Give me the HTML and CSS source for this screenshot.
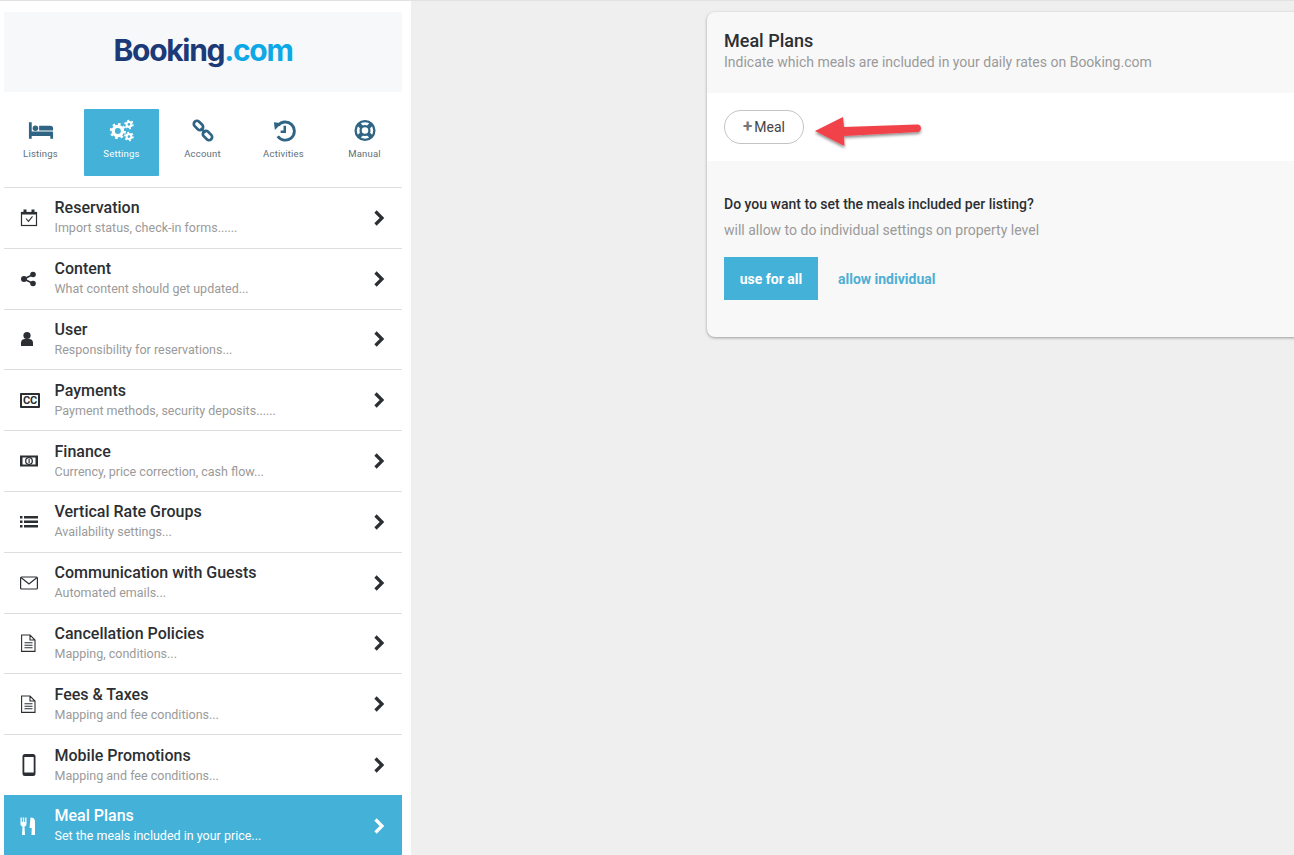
FILE: index.html
```html
<!DOCTYPE html>
<html lang="en">
<head>
<meta charset="utf-8">
<title>Meal Plans</title>
<link rel="stylesheet" href="styles.css">
</head>
<body>
<div class="app">
  <aside class="sidebar">
    <div class="logo"><span class="logo-text"><span class="logo-dark">Booking</span><span class="logo-light">.com</span></span></div>
    <nav class="tabs">
      <a class="tab">
        <svg class="tab-icon" viewBox="0 0 28 20"><path d="M1 1h3v10h22a1.500 1.500 0 0 1 1 1v7h-3v-3H4v3H1z"/><circle cx="8" cy="7.500" r="3"/><path d="M12 5h12a3 3 0 0 1 3 3v2H12z"/></svg>
        <span>Listings</span>
      </a>
      <a class="tab active">
        <svg class="tab-icon" viewBox="0 0 28 24"><g fill="none" stroke="currentColor"><circle cx="9.500" cy="12.500" r="5" stroke-width="3.500"/><circle cx="9.500" cy="12.500" r="7.500" stroke-width="2.400" stroke-dasharray="2.800 3.090"/><circle cx="21.500" cy="5.500" r="2.600" stroke-width="2.200"/><circle cx="21.500" cy="5.500" r="4.300" stroke-width="1.800" stroke-dasharray="2 2.500"/><circle cx="21.500" cy="18.500" r="2.600" stroke-width="2.200"/><circle cx="21.500" cy="18.500" r="4.300" stroke-width="1.800" stroke-dasharray="2 2.500"/></g></svg>
        <span>Settings</span>
      </a>
      <a class="tab">
        <svg class="tab-icon" viewBox="0 0 24 24"><g fill="none" stroke="currentColor" stroke-width="2.800"><rect x="1.800" y="3.500" width="11" height="6.500" rx="3.200" transform="rotate(45 7.300 6.700)"/><rect x="11.200" y="14" width="11" height="6.500" rx="3.200" transform="rotate(45 16.700 17.200)"/></g><path d="M9.500 9.500l5 5" fill="none" stroke="currentColor" stroke-width="2.600"/></svg>
        <span>Account</span>
      </a>
      <a class="tab">
        <svg class="tab-icon" viewBox="0 0 24 24"><path d="M6 6.500A9.500 9.500 0 1 1 5.500 18" fill="none" stroke="currentColor" stroke-width="3"/><path d="M1.500 3.500l8 1-7 7z"/><path d="M11.500 7h2.600v7.500H8.500V12h3z"/></svg>
        <span>Activities</span>
      </a>
      <a class="tab">
        <svg class="tab-icon" viewBox="0 0 24 24"><circle cx="12" cy="12" r="9.800" fill="none" stroke="currentColor" stroke-width="2.400"/><circle cx="12" cy="12" r="4.600" fill="none" stroke="currentColor" stroke-width="2.400"/><g stroke="currentColor" stroke-width="4.200"><path d="M5 5l4 4M19 5l-4 4M5 19l4-4M19 19l-4-4"/></g></svg>
        <span>Manual</span>
      </a>
    </nav>
    <ul class="menu">
      <li class="row">
        <svg class="row-icon" viewBox="0 0 18 18"><g fill="none" stroke="currentColor"><rect x="1.500" y="3.500" width="15" height="13" stroke-width="1.200"/><path d="M6 9.500l2.500 2.800 4-5" stroke-width="1.100"/></g><path d="M1 3h16v2.500H1zM3.500 0.500h3V3h-3zM11.500 0.500h3V3h-3z"/></svg>
        <div class="row-text"><div class="row-title">Reservation</div><div class="row-sub">Import status, check-in forms......</div></div>
        <svg class="chevron" viewBox="0 0 12 16"><path d="M2.500 1.500L9 8l-6.500 6.500" fill="none" stroke="currentColor" stroke-width="3.200"/></svg>
      </li>
      <li class="row">
        <svg class="row-icon" viewBox="0 0 18 18"><circle cx="4" cy="9" r="3"/><circle cx="13" cy="4.500" r="2.800"/><circle cx="13" cy="13.500" r="2.800"/><path d="M4 9l9-4.500M4 9l9 4.500" stroke="currentColor" stroke-width="1.500"/></svg>
        <div class="row-text"><div class="row-title">Content</div><div class="row-sub">What content should get updated...</div></div>
        <svg class="chevron" viewBox="0 0 12 16"><path d="M2.500 1.500L9 8l-6.500 6.500" fill="none" stroke="currentColor" stroke-width="3.200"/></svg>
      </li>
      <li class="row">
        <svg class="row-icon" viewBox="0 0 18 18"><circle cx="7" cy="5.500" r="3.600"/><path d="M1 16v-3.500C1 10 3 9 5 9h4c2 0 4 1 4 3.500V16z"/></svg>
        <div class="row-text"><div class="row-title">User</div><div class="row-sub">Responsibility for reservations...</div></div>
        <svg class="chevron" viewBox="0 0 12 16"><path d="M2.500 1.500L9 8l-6.500 6.500" fill="none" stroke="currentColor" stroke-width="3.200"/></svg>
      </li>
      <li class="row">
        <span class="cc-icon">CC</span>
        <div class="row-text"><div class="row-title">Payments</div><div class="row-sub">Payment methods, security deposits......</div></div>
        <svg class="chevron" viewBox="0 0 12 16"><path d="M2.500 1.500L9 8l-6.500 6.500" fill="none" stroke="currentColor" stroke-width="3.200"/></svg>
      </li>
      <li class="row">
        <svg class="row-icon" viewBox="0 0 18 18"><path fill-rule="evenodd" d="M0 3.500h18v11H0zM2.500 5.500v7h13v-7z"/><circle cx="9" cy="9" r="3.300" fill="none" stroke="currentColor" stroke-width="1.300"/><path d="M8.500 7h1.200v4H8.500z"/></svg>
        <div class="row-text"><div class="row-title">Finance</div><div class="row-sub">Currency, price correction, cash flow...</div></div>
        <svg class="chevron" viewBox="0 0 12 16"><path d="M2.500 1.500L9 8l-6.500 6.500" fill="none" stroke="currentColor" stroke-width="3.200"/></svg>
      </li>
      <li class="row">
        <svg class="row-icon" viewBox="0 0 18 18"><path d="M0 3h2.500v2.500H0zM4 3h14v2.500H4zM0 7.500h2.500V10H0zM4 7.500h14V10H4zM0 12h2.500v2.500H0zM4 12h14v2.500H4z"/></svg>
        <div class="row-text"><div class="row-title">Vertical Rate Groups</div><div class="row-sub">Availability settings...</div></div>
        <svg class="chevron" viewBox="0 0 12 16"><path d="M2.500 1.500L9 8l-6.500 6.500" fill="none" stroke="currentColor" stroke-width="3.200"/></svg>
      </li>
      <li class="row">
        <svg class="row-icon" viewBox="0 0 18 18"><g fill="none" stroke="currentColor" stroke-width="1.200"><rect x="0.600" y="3" width="16.800" height="12" rx="1"/><path d="M1 3.500l8 6.500 8-6.500"/></g></svg>
        <div class="row-text"><div class="row-title">Communication with Guests</div><div class="row-sub">Automated emails...</div></div>
        <svg class="chevron" viewBox="0 0 12 16"><path d="M2.500 1.500L9 8l-6.500 6.500" fill="none" stroke="currentColor" stroke-width="3.200"/></svg>
      </li>
      <li class="row">
        <svg class="row-icon" viewBox="0 0 18 18"><path d="M1.600 1h8.400l5 5v11.400H1.600zM10 1v5h5M4.500 8.800h8M4.500 11.300h8M4.500 13.800h8" fill="none" stroke="currentColor" stroke-width="1.100"/></svg>
        <div class="row-text"><div class="row-title">Cancellation Policies</div><div class="row-sub">Mapping, conditions...</div></div>
        <svg class="chevron" viewBox="0 0 12 16"><path d="M2.500 1.500L9 8l-6.500 6.500" fill="none" stroke="currentColor" stroke-width="3.200"/></svg>
      </li>
      <li class="row">
        <svg class="row-icon" viewBox="0 0 18 18"><path d="M1.600 1h8.400l5 5v11.400H1.600zM10 1v5h5M4.500 8.800h8M4.500 11.300h8M4.500 13.800h8" fill="none" stroke="currentColor" stroke-width="1.100"/></svg>
        <div class="row-text"><div class="row-title">Fees &amp; Taxes</div><div class="row-sub">Mapping and fee conditions...</div></div>
        <svg class="chevron" viewBox="0 0 12 16"><path d="M2.500 1.500L9 8l-6.500 6.500" fill="none" stroke="currentColor" stroke-width="3.200"/></svg>
      </li>
      <li class="row">
        <svg class="row-icon tall" viewBox="0 0 14 22"><path fill-rule="evenodd" d="M3 0h8a2.500 2.500 0 0 1 2.500 2.500v17A2.500 2.500 0 0 1 11 22H3a2.500 2.500 0 0 1-2.500-2.500v-17A2.500 2.500 0 0 1 3 0zM2.300 3v15.500h9.400V3z"/></svg>
        <div class="row-text"><div class="row-title">Mobile Promotions</div><div class="row-sub">Mapping and fee conditions...</div></div>
        <svg class="chevron" viewBox="0 0 12 16"><path d="M2.500 1.500L9 8l-6.500 6.500" fill="none" stroke="currentColor" stroke-width="3.200"/></svg>
      </li>
      <li class="row current">
        <svg class="row-icon" viewBox="0 0 18 18"><path d="M0.500 0.500h1.300v4.500h1V0.500h1.400v4.500h1V0.500h1.300v6.500c0 1.500-1 2.300-2 2.500L5 18H2L2.500 9.500c-1-.2-2-1-2-2.500zM10.500 0.500c3 0 4.500 1.500 4.500 4V18h-3.500l.2-7H9.500z"/></svg>
        <div class="row-text"><div class="row-title">Meal Plans</div><div class="row-sub">Set the meals included in your price...</div></div>
        <svg class="chevron" viewBox="0 0 12 16"><path d="M2.500 1.500L9 8l-6.500 6.500" fill="none" stroke="currentColor" stroke-width="3.200"/></svg>
      </li>
    </ul>
  </aside>
  <main class="main">
    <section class="card">
      <header class="card-head">
        <h1 class="card-title">Meal Plans</h1>
        <p class="card-sub">Indicate which meals are included in your daily rates on Booking.com</p>
      </header>
      <div class="card-action">
        <button class="add-btn"><span class="plus">+</span>Meal</button>
      </div>
      <div class="card-body">
        <h2 class="question">Do you want to set the meals included per listing?</h2>
        <p class="hint">will allow to do individual settings on property level</p>
        <div class="choices">
          <button class="primary">use for all</button>
          <a class="link">allow individual</a>
        </div>
      </div>
      <svg class="arrow" viewBox="0 0 120 50">
        <defs><filter id="sh" x="-20%" y="-40%" width="140%" height="200%"><feDropShadow dx="0" dy="2" stdDeviation="1.800" flood-color="#000" flood-opacity=".45"/></filter></defs>
        <path d="M4 21L32 7l1 10 73-2.500a3.500 3.500 0 0 1 .4 7.500L33 26l.5 10z" fill="#f2424a" filter="url(#sh)"/>
      </svg>
    </section>
  </main>
</div>
</body>
</html>
```

FILE: styles.css
```css
* { box-sizing: border-box; }
html, body { margin: 0; height: 100%; overflow: hidden; }
body {
  background: #efefef;
  font-family: Roboto, "Noto Sans", sans-serif;
  color: #2b2f33;
}
.app {
  display: flex;
  height: 855px;
  border-top: 1px solid #e2e2e2;
}
.sidebar {
  flex: 0 0 411px;
  background: #fff;
  padding-top: 11px;
  overflow: hidden;
}
.logo {
  margin: 0 9px 0 4px;
  height: 80px;
  background: #f7f8fa;
  display: flex;
  align-items: center;
  justify-content: center;
}
.logo-text {
  font-family: Inter, "Liberation Sans", sans-serif;
  font-weight: 700;
  font-size: 30px;
  letter-spacing: -1.3px;
  line-height: 1;
  position: relative;
  top: -2px;
}
.logo-dark { color: #1b3a77; }
.logo-light { color: #0ea8e6; }
.tabs {
  display: flex;
  padding-top: 17px;
  height: 95px;
  border-bottom: 0;
}
.tab {
  flex: 0 0 81px;
  height: 67px;
  margin: 0;
  border-radius: 1px;
  display: flex;
  flex-direction: column;
  align-items: center;
  color: #2f6485;
  padding-top: 10px;
}
.tab:first-child { flex-basis: 84px; padding-right: 3px; }
.tab.active {
  flex-basis: 75px;
  background: #43b1d8;
  color: #fff;
  margin-right: 3px;
}
.tab:nth-child(3) { margin-left: 0; }
.tab-icon {
  width: 26px;
  height: 23px;
  fill: currentColor;
  margin-bottom: 6px;
}
.tab span {
  font-size: 9.500px;
  letter-spacing: .2px;
  line-height: 12px;
  color: #5d6f7c;
}
.tab.active span { color: #fff; }
.menu {
  list-style: none;
  margin: 0 9px 0 4px;
  padding: 0;
}
.row {
  height: 60.800px;
  border-top: 1px solid #dedede;
  display: flex;
  align-items: center;
  padding: 0 17px 0 16px;
}
.row.current {
  background: #43b1d8;
  color: #fff;
  border-top-color: #43b1d8;
}
.row-icon {
  flex: 0 0 18px;
  width: 18px;
  height: 18px;
  margin-right: 16.500px;
  fill: currentColor;
  color: #2b2f33;
}
.row-icon.tall { height: 22px; flex-basis: 18px; }
.current .row-icon { color: #fff; }
.cc-icon {
  flex: 0 0 20px;
  width: 20px;
  height: 15px;
  margin-right: 14.500px;
  border: 2px solid #2b2f33;
  border-radius: 1px;
  font-size: 11px;
  font-weight: 700;
  line-height: 11px;
  text-align: center;
  letter-spacing: -.3px;
}
.row-text { flex: 1; min-width: 0; }
.row-title {
  font-size: 16px;
  font-weight: 500;
  line-height: 20px;
  color: #2b2f33;
}
.row-sub {
  font-size: 12.500px;
  line-height: 19px;
  color: #9a9a9a;
}
.current .row-title, .current .row-sub { color: #fff; }
.chevron {
  flex: 0 0 12px;
  width: 12px;
  height: 16px;
  color: #2b2f33;
}
.current .chevron { color: #fff; }
.main {
  flex: 1;
  min-width: 0;
  padding: 11px 0 0 296px;
  overflow: hidden;
}
.card {
  position: relative;
  width: 700px;
  height: 325px;
  background: #f8f8f8;
  border-radius: 8px;
  box-shadow: 0 1px 3px rgba(0, 0, 0, .35);
}
.card-head {
  height: 81px;
  padding: 18px 17px 0;
  border-radius: 8px 8px 0 0;
}
.card-title {
  margin: 0;
  font-size: 18px;
  font-weight: 500;
  line-height: 22px;
  color: #2b2f33;
}
.card-sub {
  margin: 0;
  font-size: 14px;
  line-height: 20px;
  color: #9a9a9a;
}
.card-action {
  height: 68px;
  background: #fff;
  padding: 17px 17px 0;
}
.add-btn {
  width: 80px;
  height: 34px;
  border: 1px solid #c4c4c4;
  border-radius: 17px;
  background: #fff;
  font: 400 14px Roboto, sans-serif;
  color: #444;
  padding: 0;
}
.plus {
  font-weight: 700;
  font-size: 17px;
  line-height: 14px;
  color: #777;
  margin-right: 2px;
}
.card-body { padding: 33px 17px 0; }
.question {
  margin: 0;
  font-size: 14px;
  font-weight: 500;
  line-height: 20px;
  color: #2b2f33;
}
.hint {
  margin: 6px 0 0;
  font-size: 14px;
  line-height: 20px;
  color: #9a9a9a;
}
.choices {
  display: flex;
  align-items: center;
  gap: 20px;
  margin-top: 17px;
}
.primary {
  width: 94px;
  height: 43px;
  border: 0;
  background: #43b1d8;
  color: #fff;
  font: 700 14px Roboto, sans-serif;
  padding: 0;
}
.link {
  font-size: 14px;
  font-weight: 700;
  color: #4eafd5;
}
.arrow {
  position: absolute;
  left: 104px;
  top: 98px;
  width: 120px;
  height: 50px;
  overflow: visible;
}
```
